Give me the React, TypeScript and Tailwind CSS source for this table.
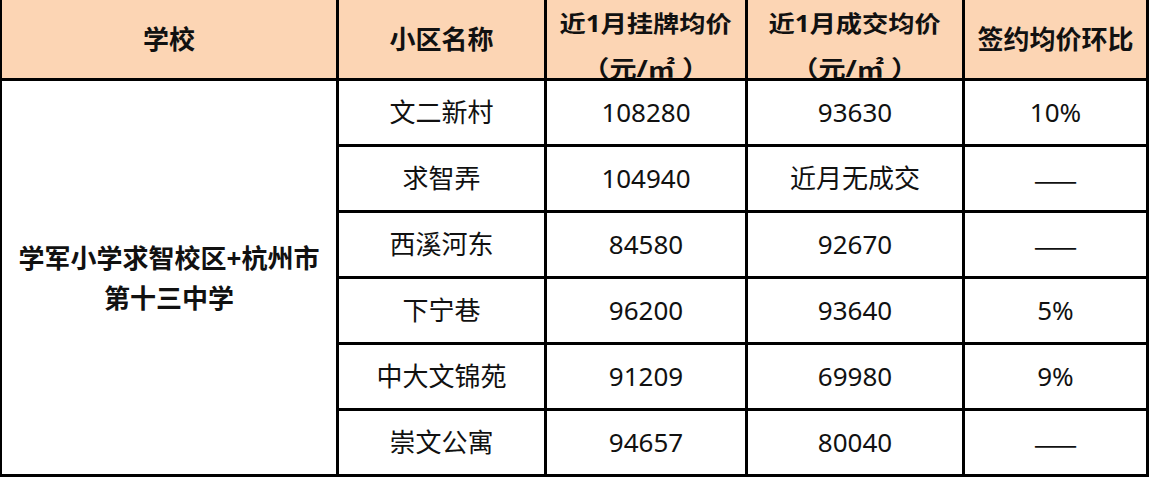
import React from "react";

const rows = [
  ["文二新村", "108280", "93630", "10%"],
  ["求智弄", "104940", "近月无成交", "——"],
  ["西溪河东", "84580", "92670", "——"],
  ["下宁巷", "96200", "93640", "5%"],
  ["中大文锦苑", "91209", "69980", "9%"],
  ["崇文公寓", "94657", "80040", "——"],
];

export default function App() {
  const font = { fontFamily: "'Noto Sans', 'Noto Sans CJK SC', sans-serif" };
  const cjk = { fontFamily: "'Noto Sans CJK SC', sans-serif" };
  return (
    <div className="w-[1152px] h-[478px] bg-white overflow-hidden" style={font}>
      <div className="w-[1149px] grid grid-cols-[334px_205px_198px_214px_181px] grid-rows-[78px_repeat(6,63px)] gap-[3px] bg-black pl-[2px] pr-[3px] pb-[3px]">
        <div className="bg-[#fcd5b4] flex items-center justify-center font-bold text-[26px] text-[#111]">学校</div>
        <div className="bg-[#fcd5b4] flex items-center justify-center font-bold text-[26px] text-[#111]">小区名称</div>
        <div className="bg-[#fcd5b4] flex flex-col items-center overflow-hidden pt-[1px] font-bold text-[23px] text-[#111]">
          <span className="inline-block leading-[44px] scale-x-[1.14] whitespace-nowrap">近1月挂牌均价</span>
          <span className="inline-block leading-[46px] scale-x-[1.18] whitespace-nowrap">（元/㎡ ）</span>
        </div>
        <div className="bg-[#fcd5b4] flex flex-col items-center overflow-hidden pt-[1px] font-bold text-[23px] text-[#111]">
          <span className="inline-block leading-[44px] scale-x-[1.14] whitespace-nowrap">近1月成交均价</span>
          <span className="inline-block leading-[46px] scale-x-[1.18] whitespace-nowrap">（元/㎡ ）</span>
        </div>
        <div className="bg-[#fcd5b4] flex items-center justify-center font-bold text-[26px] text-[#111]">签约均价环比</div>

        <div className="row-span-6 bg-white flex flex-col items-center justify-center font-bold text-[26px] leading-[40px] text-[#111]">
          <span>学军小学求智校区+杭州市</span>
          <span>第十三中学</span>
        </div>
        {rows.map((r, i) => (
          <React.Fragment key={i}>
            {r.map((c, j) => (
              <div
                key={j}
                className="bg-white flex items-center justify-center text-[26px] text-[#111]"
                style={c === "——" ? cjk : undefined}
              >
                {c}
              </div>
            ))}
          </React.Fragment>
        ))}
      </div>
    </div>
  );
}
